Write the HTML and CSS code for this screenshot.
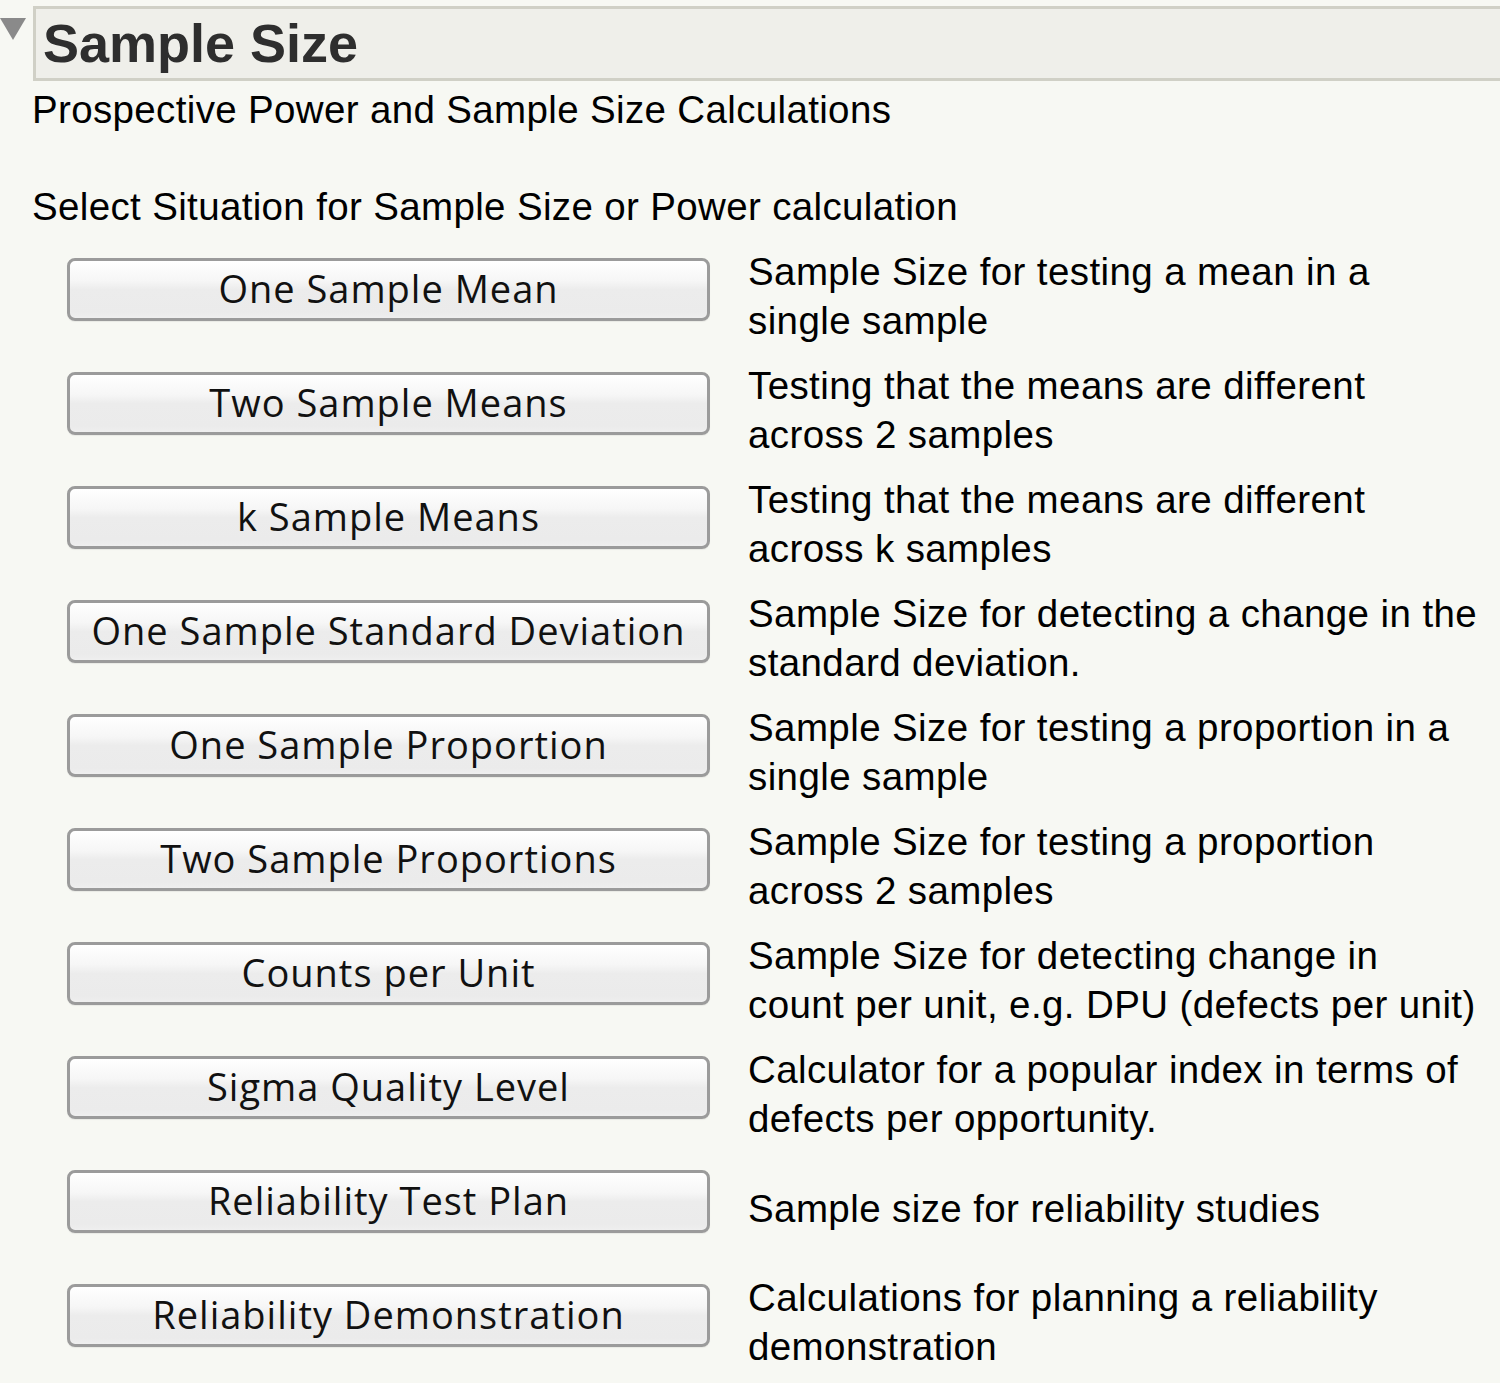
FILE: index.html
```html
<!DOCTYPE html>
<html lang="en">
<head>
    <meta charset="UTF-8">
    <title>Sample Size</title>
    <link rel="stylesheet" href="styles.css">
</head>
<body>

    <div class="outline-header">
        <span class="disclosure"></span>
        <div class="title-box">
            <h1>Sample Size</h1>
        </div>
    </div>

    <p class="subtitle">Prospective Power and Sample Size Calculations</p>
    <p class="prompt">Select Situation for Sample Size or Power calculation</p>

    <div class="situations">
        <div class="situation">
            <button class="calc-btn">One Sample Mean</button>
            <div class="desc">Sample Size for testing a mean in a<br>single sample</div>
        </div>
        <div class="situation">
            <button class="calc-btn">Two Sample Means</button>
            <div class="desc">Testing that the means are different<br>across 2 samples</div>
        </div>
        <div class="situation">
            <button class="calc-btn">k Sample Means</button>
            <div class="desc">Testing that the means are different<br>across k samples</div>
        </div>
        <div class="situation">
            <button class="calc-btn">One Sample Standard Deviation</button>
            <div class="desc">Sample Size for detecting a change in the<br>standard deviation.</div>
        </div>
        <div class="situation">
            <button class="calc-btn">One Sample Proportion</button>
            <div class="desc">Sample Size for testing a proportion in a<br>single sample</div>
        </div>
        <div class="situation">
            <button class="calc-btn">Two Sample Proportions</button>
            <div class="desc">Sample Size for testing a proportion<br>across 2 samples</div>
        </div>
        <div class="situation">
            <button class="calc-btn">Counts per Unit</button>
            <div class="desc">Sample Size for detecting change in<br>count per unit, e.g. DPU (defects per unit)</div>
        </div>
        <div class="situation">
            <button class="calc-btn">Sigma Quality Level</button>
            <div class="desc">Calculator for a popular index in terms of<br>defects per opportunity.</div>
        </div>
        <div class="situation">
            <button class="calc-btn">Reliability Test Plan</button>
            <div class="desc">Sample size for reliability studies</div>
        </div>
        <div class="situation">
            <button class="calc-btn">Reliability Demonstration</button>
            <div class="desc">Calculations for planning a reliability<br>demonstration</div>
        </div>
    </div>

</body>
</html>
```

FILE: styles.css
```css
body {
    margin: 0;
    background-color: #f7f8f3;
    font-family: "Liberation Sans", Arial, sans-serif;
    color: #000;
    overflow: hidden;
}

.outline-header {
    display: flex;
    align-items: flex-start;
}

.disclosure {
    width: 0;
    height: 0;
    margin-top: 18px;
    border-left: 13px solid transparent;
    border-right: 13px solid transparent;
    border-top: 22px solid #8a8a8a;
}

.title-box {
    flex: 1;
    margin: 6px 0 0 7px;
    height: 69px;
    border: 3px solid #d0d0c6;
    border-right: none;
    background-color: #efefea;
    padding-left: 7px;
}

.title-box h1 {
    margin: 0;
    font-size: 54px;
    line-height: 69px;
    font-weight: bold;
    color: #2e2e2e;
}

.subtitle, .prompt {
    margin: 0;
    padding-left: 32px;
    font-size: 38.5px;
    line-height: 49px;
    letter-spacing: 0.35px;
    white-space: nowrap;
}

.subtitle {
    margin-top: 4px;
}

.prompt {
    margin-top: 48px;
}

.situations {
    display: flex;
    flex-direction: column;
    gap: 16px;
    margin-top: 16px;
    padding-left: 67px;
}

.situation {
    display: grid;
    grid-template-columns: 643px auto;
    column-gap: 38px;
    height: 98px;
}

.calc-btn {
    align-self: start;
    margin-top: 11px;
    height: 63px;
    padding: 0 0 3px;
    border: 3px solid #9b9b9b;
    border-radius: 8px;
    background: linear-gradient(to bottom, #ffffff 0%, #f6f6f6 35%, #ececec 50%, #ebebeb 90%, #efefef 100%);
    box-shadow: 0 1px 1px rgba(0, 0, 0, 0.06);
    font-family: "Open Sans", "Noto Sans", sans-serif;
    font-size: 38px;
    color: #111;
    letter-spacing: 1px;
    cursor: pointer;
}

.desc {
    display: flex;
    align-items: center;
    font-size: 38.5px;
    line-height: 49px;
    letter-spacing: 0.4px;
    white-space: nowrap;
}
```
